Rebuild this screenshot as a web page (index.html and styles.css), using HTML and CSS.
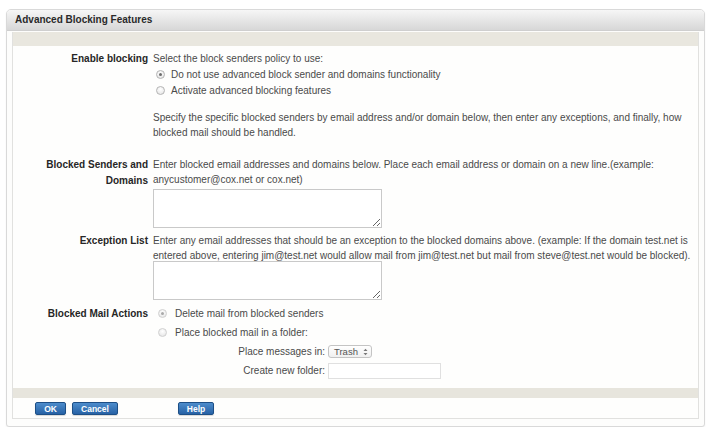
FILE: index.html
```html
<!DOCTYPE html>
<html>
<head>
<meta charset="utf-8">
<link rel="stylesheet" href="styles.css">
</head>
<body>
<div class="panel">
  <div class="header">Advanced Blocking Features</div>
  <div class="inner">
    <div class="bar-top"></div>
    <div class="content">
      <div class="row row-enable">
        <div class="label">Enable blocking</div>
        <div class="field">
          <div class="line">Select the block senders policy to use:</div>
          <div class="radio-line"><span class="radio checked"></span>Do not use advanced block sender and domains functionality</div>
          <div class="radio-line"><span class="radio"></span>Activate advanced blocking features</div>
          <p class="para">Specify the specific blocked senders by email address and/or domain below, then enter any exceptions, and finally, how<br>blocked mail should be handled.</p>
        </div>
      </div>
      <div class="row row-senders">
        <div class="label">Blocked Senders and<br>Domains</div>
        <div class="field">
          <div class="line">Enter blocked email addresses and domains below. Place each email address or domain on a new line.(example:<br>anycustomer@cox.net or cox.net)</div>
          <textarea class="area"></textarea>
        </div>
      </div>
      <div class="row row-exception">
        <div class="label">Exception List</div>
        <div class="field">
          <div class="line">Enter any email addresses that should be an exception to the blocked domains above. (example: If the domain test.net is<br>entered above, entering jim@test.net would allow mail from jim@test.net but mail from steve@test.net would be blocked).</div>
          <textarea class="area"></textarea>
        </div>
      </div>
      <div class="row row-actions">
        <div class="label">Blocked Mail Actions</div>
        <div class="field">
          <div class="radio-line tall"><span class="radio checked faint"></span>Delete mail from blocked senders</div>
          <div class="radio-line tall"><span class="radio faint"></span>Place blocked mail in a folder:</div>
          <div class="subgrid">
            <div class="sublabel">Place messages in:</div>
            <div class="subfield"><span class="select">Trash<svg class="updown" width="5" height="8" viewBox="0 0 5 8"><path d="M0.5 3 L2.5 0.8 L4.5 3 Z M0.5 5 L2.5 7.2 L4.5 5 Z" fill="#777"/></svg></span></div>
            <div class="sublabel">Create new folder:</div>
            <div class="subfield"><span class="textbox"></span></div>
          </div>
        </div>
      </div>
    </div>
    <div class="bar-bottom"></div>
    <div class="buttons">
      <span class="btn btn-ok">OK</span>
      <span class="btn btn-cancel">Cancel</span>
      <span class="btn btn-help">Help</span>
    </div>
  </div>
</div>
</body>
</html>
```
FILE: styles.css
```css
html, body {
  margin: 0;
  padding: 0;
  background: #ffffff;
}
body {
  font-family: "Liberation Sans", Arial, sans-serif;
  font-size: 10px;
  color: #4a4a4a;
}
.panel {
  margin: 9px 0 0 6px;
  width: 697px;
  border: 1px solid #d9d9d9;
  border-radius: 5px 5px 3px 3px;
  background: #fdfdfc;
  padding-bottom: 7px;
  box-shadow: 0 1px 2px rgba(0,0,0,0.06);
}
.header {
  height: 20px;
  line-height: 19px;
  padding-left: 8px;
  font-weight: bold;
  color: #2a2a2a;
  background: linear-gradient(#f6f6f6, #d7d7d7);
  border-radius: 4px 4px 0 0;
  border-bottom: 1px solid #cfcfcf;
}
.inner {
  margin: 1px 5px 0 5px;
  border: 1px solid #e1e1df;
  border-top: none;
  background: #fefefd;
}
.bar-top {
  height: 14px;
  background: #e9e7df;
}
.bar-bottom {
  height: 10px;
  background: #e7e5dd;
}
.content {
  padding: 5px 0 8px 0;
}
.row {
  display: grid;
  grid-template-columns: 135px 1fr;
  column-gap: 5px;
}
.row-senders { margin-top: 17px; }
.row-exception { margin-top: 5px; }
.row-actions { margin-top: 4px; }
.label {
  text-align: right;
  font-weight: bold;
  color: #262626;
  line-height: 15px;
}
.row-senders .label { line-height: 16px; }
.row-actions .label { line-height: 19px; }
.field {
  line-height: 15px;
  white-space: nowrap;
}
.line {
  line-height: 15px;
}
.radio-line {
  display: flex;
  align-items: center;
  height: 16px;
  padding-left: 3px;
}
.radio-line.tall {
  height: 19px;
  padding-left: 5px;
}
.radio {
  display: inline-block;
  box-sizing: border-box;
  width: 9px;
  height: 9px;
  border-radius: 50%;
  border: 1px solid #b4b4b4;
  background: radial-gradient(circle at 50% 35%, #ffffff, #e2e2e2);
  margin-right: 6px;
  position: relative;
}
.radio-line.tall .radio { margin-right: 8px; }
.radio.faint { border-color: #d0d0d0; }
.radio.checked::after {
  content: "";
  position: absolute;
  left: 2px;
  top: 2px;
  width: 3px;
  height: 3px;
  border-radius: 50%;
  background: #6b6b6b;
}
.radio.faint.checked::after { background: #a8a8a8; }
.para {
  margin: 12px 0 0 0;
  line-height: 15px;
}
.area {
  display: block;
  box-sizing: border-box;
  width: 229px;
  height: 39px;
  margin: 2px 0 0 0;
  border: 1px solid #c9c9c9;
  background: #ffffff;
  padding: 0;
  resize: both;
  font: inherit;
}
.row-exception .area { margin-top: -2px; }
.subgrid {
  display: grid;
  grid-template-columns: 172px auto;
  column-gap: 3px;
  justify-content: start;
  align-items: center;
}
.sublabel {
  text-align: right;
  height: 19px;
  line-height: 19px;
}
.subfield {
  height: 19px;
  display: flex;
  align-items: center;
}
.select {
  box-sizing: border-box;
  display: inline-flex;
  align-items: center;
  width: 44px;
  height: 13px;
  padding-left: 5px;
  border: 1px solid #c4c4c4;
  border-radius: 3px;
  background: linear-gradient(#ffffff, #f0f0f0);
  color: #555;
  font-size: 9.5px;
  gap: 5px;
}
.updown { display: block; }
.textbox {
  display: block;
  box-sizing: border-box;
  width: 113px;
  height: 16px;
  border: 1px solid #e0e0e0;
  background: #ffffff;
}
.buttons {
  display: flex;
  align-items: flex-start;
  height: 16px;
  padding: 4px 0 0 22px;
}
.btn {
  box-sizing: border-box;
  display: inline-flex;
  align-items: center;
  justify-content: center;
  height: 13px;
  border: 1px solid #1d4f86;
  border-radius: 2px;
  background: linear-gradient(#4d8ccc, #2762a5);
  color: #ffffff;
  font-weight: bold;
  font-size: 8.5px;
  box-shadow: 0 1px 1px rgba(0,0,0,0.15);
}
.btn-ok { width: 31px; }
.btn-cancel { width: 46px; margin-left: 6px; }
.btn-help { width: 36px; margin-left: 60px; }
```
